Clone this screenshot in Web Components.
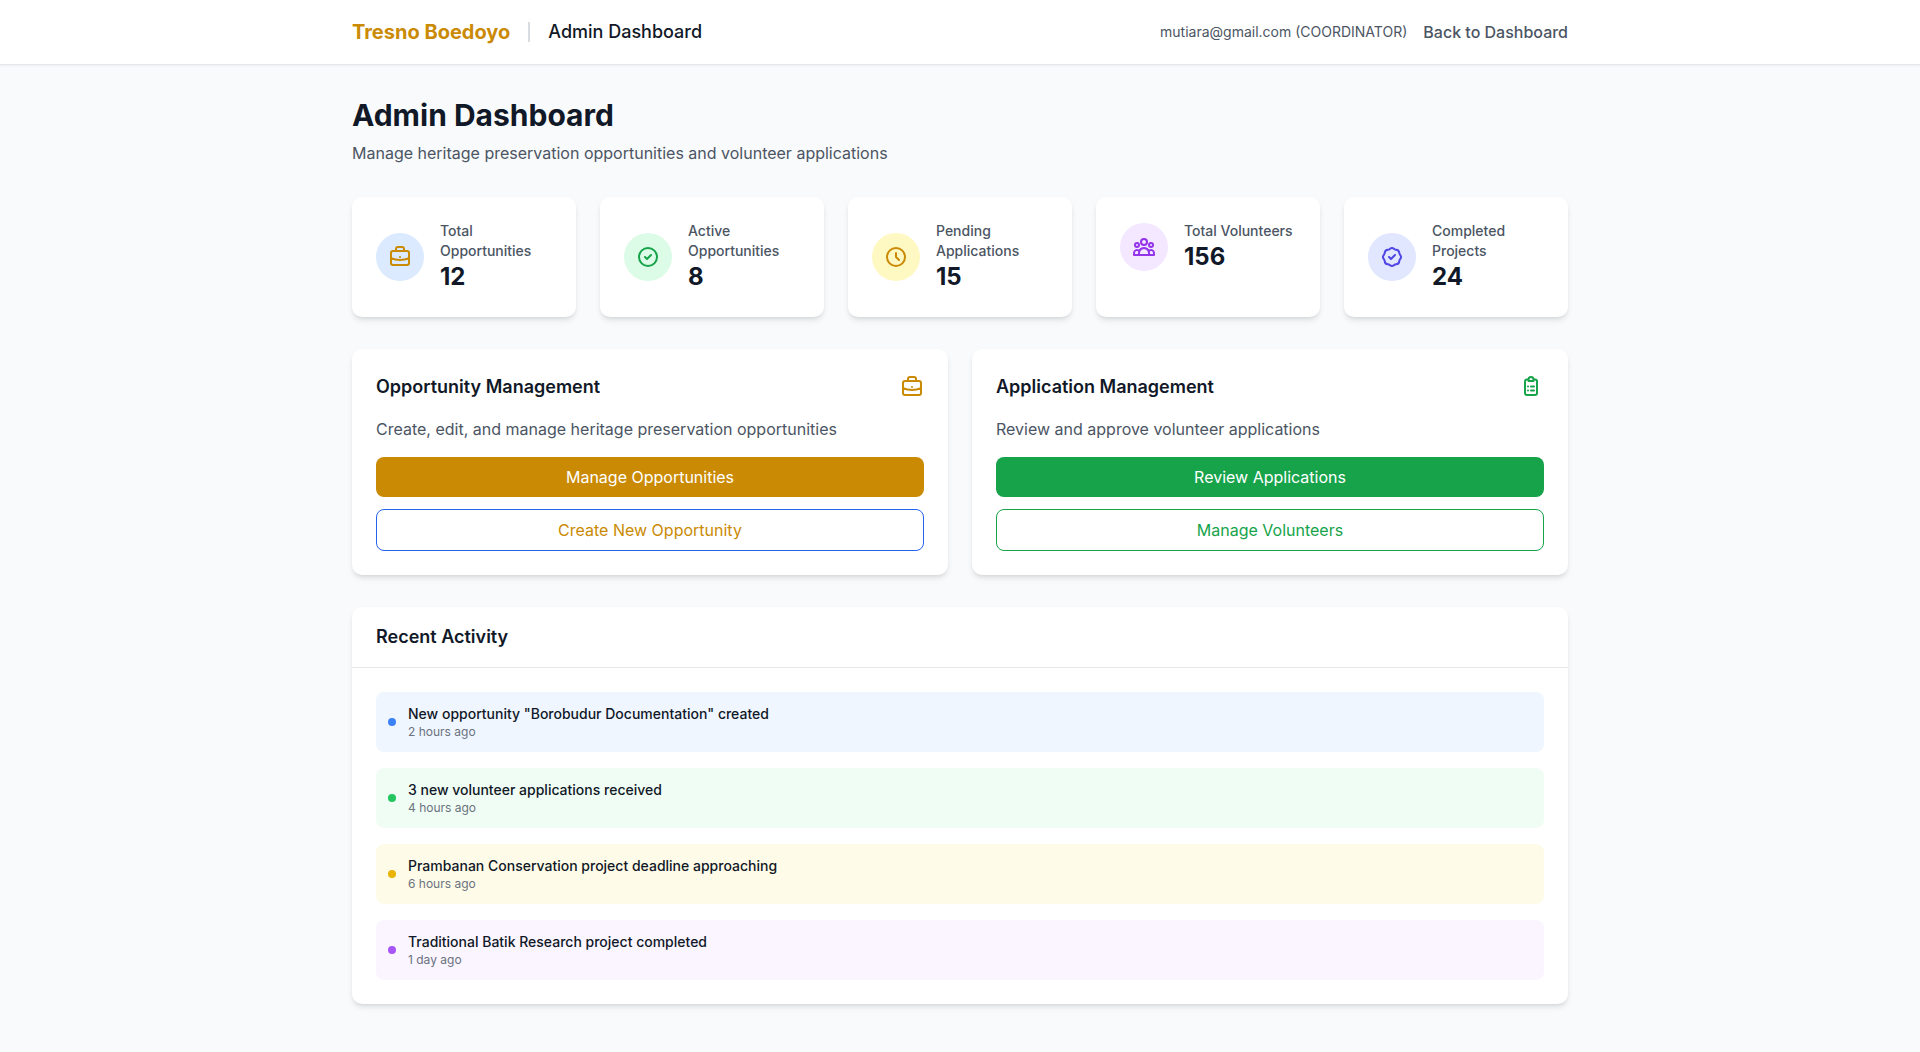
<!DOCTYPE html>
<html lang="en">
<head>
<meta charset="utf-8">
<title>Admin Dashboard</title>
<style>
  html, body { margin: 0; padding: 0; }
  body {
    min-height: 100vh;
    background: #f9fafb;
    font-family: Inter, "Liberation Sans", sans-serif;
    color: #111827;
  }
</style>
</head>
<body>
<admin-app>
  <top-nav slot="nav" brand="Tresno Boedoyo" section="Admin Dashboard" user="mutiara@gmail.com (COORDINATOR)" back="Back to Dashboard"></top-nav>

  <page-heading heading="Admin Dashboard">Manage heritage preservation opportunities and volunteer applications</page-heading>

  <stats-row>
    <stat-card icon="briefcase" tint="#dbeafe" color="#ca8a04" label="Total Opportunities" value="12"></stat-card>
    <stat-card icon="check-circle" tint="#dcfce7" color="#16a34a" label="Active Opportunities" value="8"></stat-card>
    <stat-card icon="clock" tint="#fef9c3" color="#ca8a04" label="Pending Applications" value="15"></stat-card>
    <stat-card icon="user-group" tint="#f3e8ff" color="#9333ea" label="Total Volunteers" value="156"></stat-card>
    <stat-card icon="badge-check" tint="#e0e7ff" color="#4f46e5" label="Completed Projects" value="24"></stat-card>
  </stats-row>

  <manage-row>
    <manage-card heading="Opportunity Management" icon="briefcase" color="#ca8a04" text="Create, edit, and manage heritage preservation opportunities">
      <action-button fill="#ca8a04">Manage Opportunities</action-button>
      <action-button outline="#2563eb" color="#ca8a04">Create New Opportunity</action-button>
    </manage-card>
    <manage-card heading="Application Management" icon="clipboard-list" color="#16a34a" text="Review and approve volunteer applications">
      <action-button fill="#16a34a">Review Applications</action-button>
      <action-button outline="#16a34a" color="#16a34a">Manage Volunteers</action-button>
    </manage-card>
  </manage-row>

  <recent-activity heading="Recent Activity">
    <activity-item tint="#eff6ff" dot="#3b82f6" time="2 hours ago">New opportunity "Borobudur Documentation" created</activity-item>
    <activity-item tint="#f0fdf4" dot="#22c55e" time="4 hours ago">3 new volunteer applications received</activity-item>
    <activity-item tint="#fefce8" dot="#eab308" time="6 hours ago">Prambanan Conservation project deadline approaching</activity-item>
    <activity-item tint="#faf5ff" dot="#a855f7" time="1 day ago">Traditional Batik Research project completed</activity-item>
  </recent-activity>
</admin-app>

<script>
const ICONS = {
  "briefcase": "M21 13.255A23.931 23.931 0 0112 15c-3.183 0-6.22-.62-9-1.745M16 6V4a2 2 0 00-2-2h-4a2 2 0 00-2 2v2m4 6h.01M5 20h14a2 2 0 002-2V8a2 2 0 00-2-2H5a2 2 0 00-2 2v10a2 2 0 002 2z",
  "check-circle": "M9 12l2 2 4-4m6 2a9 9 0 11-18 0 9 9 0 0118 0z",
  "clock": "M12 8v4l3 3m6-3a9 9 0 11-18 0 9 9 0 0118 0z",
  "user-group": "M17 20h5v-2a3 3 0 00-5.356-1.857M17 20H7m10 0v-2c0-.656-.126-1.283-.356-1.857M7 20H2v-2a3 3 0 015.356-1.857M7 20v-2c0-.656.126-1.283.356-1.857m0 0a5.002 5.002 0 019.288 0M15 7a3 3 0 11-6 0 3 3 0 016 0zm6 3a2 2 0 11-4 0 2 2 0 014 0zM7 10a2 2 0 11-4 0 2 2 0 014 0z",
  "badge-check": "M9 12l2 2 4-4M7.835 4.697a3.42 3.42 0 001.946-.806 3.42 3.42 0 014.438 0 3.42 3.42 0 001.946.806 3.42 3.42 0 013.138 3.138 3.42 3.42 0 00.806 1.946 3.42 3.42 0 010 4.438 3.42 3.42 0 00-.806 1.946 3.42 3.42 0 01-3.138 3.138 3.42 3.42 0 00-1.946.806 3.42 3.42 0 01-4.438 0 3.42 3.42 0 00-1.946-.806 3.42 3.42 0 01-3.138-3.138 3.42 3.42 0 00-.806-1.946 3.42 3.42 0 010-4.438 3.42 3.42 0 00.806-1.946 3.42 3.42 0 013.138-3.138z",
  // narrower than the stock clipboard, with a domed clip and bullet rows
  "clipboard-list": "M8.5 4.5H7a2 2 0 00-2 2V18a2 2 0 002 2h8a2 2 0 002-2V6.5a2 2 0 00-2-2h-1.5M8.5 4.5V6h5V4.5M8.5 4.5a2.5 2.5 0 015 0M11 11.5h3M11 15.5h3M8 11.5h.01M8 15.5h.01",
};

function iconSvg(name, color) {
  return `<svg width="24" height="24" viewBox="0 0 24 24" fill="none" stroke="${color}" stroke-width="2" stroke-linecap="round" stroke-linejoin="round" style="display:block"><path d="${ICONS[name]}"/></svg>`;
}

// small helper so every element below just supplies its shadow markup
class ShadowElement extends HTMLElement {
  constructor() {
    super();
    this.attachShadow({ mode: "open" });
  }
  attr(name) {
    return this.getAttribute(name) || "";
  }
  connectedCallback() {
    this.shadowRoot.innerHTML = this.render();
  }
}

class AdminApp extends ShadowElement {
  render() {
    return `
      <style>
        :host { display: block; }
        main {
          width: 1216px;
          margin: 0 auto;
          padding: 32px 0;
        }
      </style>
      <slot name="nav"></slot>
      <main><slot></slot></main>
    `;
  }
}

class TopNav extends ShadowElement {
  render() {
    return `
      <style>
        :host {
          display: block;
          background: #fff;
          border-bottom: 1px solid #e5e7eb;
          box-shadow: 0 1px 2px rgba(0, 0, 0, 0.05);
        }
        nav {
          width: 1216px;
          height: 64px;
          margin: 0 auto;
          display: flex;
          align-items: center;
          justify-content: space-between;
        }
        .left, .right { display: flex; align-items: center; }
        .brand { font-size: 20px; line-height: 28px; font-weight: 700; color: #ca8a04; }
        .sep { width: 2px; height: 20px; background: #d8dce3; margin: 0 18px; }
        .section { font-size: 18px; line-height: 28px; font-weight: 500; color: #111827; }
        .right { gap: 16px; }
        .user { font-size: 14px; line-height: 20px; color: #4b5563; }
        .back { font-size: 16px; line-height: 24px; font-weight: 500; color: #4b5563; }
      </style>
      <nav>
        <div class="left">
          <span class="brand">${this.attr("brand")}</span>
          <span class="sep"></span>
          <span class="section">${this.attr("section")}</span>
        </div>
        <div class="right">
          <span class="user">${this.attr("user")}</span>
          <span class="back">${this.attr("back")}</span>
        </div>
      </nav>
    `;
  }
}

class PageHeading extends ShadowElement {
  render() {
    return `
      <style>
        :host { display: block; margin-bottom: 32px; }
        h1 { margin: 0 0 8px; font-size: 30px; line-height: 36px; font-weight: 700; color: #111827; }
        p { margin: 0; font-size: 16px; line-height: 24px; color: #4b5563; }
      </style>
      <h1>${this.attr("heading")}</h1>
      <p><slot></slot></p>
    `;
  }
}

class StatsRow extends ShadowElement {
  render() {
    return `
      <style>
        :host {
          display: grid;
          grid-template-columns: repeat(5, 1fr);
          gap: 24px;
          margin-bottom: 32px;
        }
      </style>
      <slot></slot>
    `;
  }
}

class StatCard extends ShadowElement {
  render() {
    return `
      <style>
        :host {
          display: block;
          background: #fff;
          border-radius: 10px;
          padding: 24px;
          box-shadow: 0 4px 6px -1px rgba(0, 0, 0, 0.1), 0 2px 4px -2px rgba(0, 0, 0, 0.1);
        }
        .row { display: flex; align-items: center; }
        .circle {
          flex: none;
          width: 48px;
          height: 48px;
          border-radius: 50%;
          background: ${this.attr("tint")};
          display: flex;
          align-items: center;
          justify-content: center;
          margin-right: 16px;
        }
        .label { font-size: 14px; line-height: 20px; font-weight: 500; color: #4b5563; }
        .value { font-size: 24px; line-height: 32px; font-weight: 700; color: #111827; }
      </style>
      <div class="row">
        <div class="circle">${iconSvg(this.attr("icon"), this.attr("color"))}</div>
        <div>
          <div class="label">${this.attr("label")}</div>
          <div class="value">${this.attr("value")}</div>
        </div>
      </div>
    `;
  }
}

class ManageRow extends ShadowElement {
  render() {
    return `
      <style>
        :host {
          display: grid;
          grid-template-columns: repeat(2, 1fr);
          gap: 24px;
          margin-bottom: 32px;
        }
      </style>
      <slot></slot>
    `;
  }
}

class ManageCard extends ShadowElement {
  render() {
    return `
      <style>
        :host {
          display: block;
          background: #fff;
          border-radius: 10px;
          padding: 24px;
          box-shadow: 0 4px 6px -1px rgba(0, 0, 0, 0.1), 0 2px 4px -2px rgba(0, 0, 0, 0.1);
        }
        .head {
          display: flex;
          align-items: center;
          justify-content: space-between;
          margin-bottom: 16px;
        }
        h3 { margin: 0; font-size: 18px; line-height: 28px; font-weight: 600; color: #111827; }
        p { margin: 0 0 16px; font-size: 16px; line-height: 24px; color: #4b5563; }
        .actions { display: flex; flex-direction: column; gap: 12px; }
      </style>
      <div class="head">
        <h3>${this.attr("heading")}</h3>
        ${iconSvg(this.attr("icon"), this.attr("color"))}
      </div>
      <p>${this.attr("text")}</p>
      <div class="actions"><slot></slot></div>
    `;
  }
}

class ActionButton extends ShadowElement {
  render() {
    const fill = this.attr("fill");
    const outline = this.attr("outline");
    const look = fill
      ? `background: ${fill}; color: #fff; padding: 8px 16px;`
      : `background: #fff; color: ${this.attr("color")}; border: 1px solid ${outline}; padding: 8px 16px;`;
    return `
      <style>
        :host {
          display: block;
          border-radius: 8px;
          text-align: center;
          font-size: 16px;
          line-height: 24px;
          font-weight: 400;
          ${look}
        }
      </style>
      <slot></slot>
    `;
  }
}

class RecentActivity extends ShadowElement {
  render() {
    return `
      <style>
        :host {
          display: block;
          background: #fff;
          border-radius: 10px;
          box-shadow: 0 4px 6px -1px rgba(0, 0, 0, 0.1), 0 2px 4px -2px rgba(0, 0, 0, 0.1);
        }
        h3 {
          margin: 0;
          padding: 16px 24px;
          font-size: 18px;
          line-height: 28px;
          font-weight: 600;
          color: #111827;
          border-bottom: 1px solid #e5e7eb;
        }
        .list { padding: 24px; display: flex; flex-direction: column; gap: 16px; }
      </style>
      <h3>${this.attr("heading")}</h3>
      <div class="list"><slot></slot></div>
    `;
  }
}

class ActivityItem extends ShadowElement {
  render() {
    return `
      <style>
        :host {
          display: flex;
          align-items: center;
          padding: 12px;
          border-radius: 8px;
          background: ${this.attr("tint")};
        }
        .dot {
          flex: none;
          width: 8px;
          height: 8px;
          border-radius: 50%;
          background: ${this.attr("dot")};
          margin-right: 12px;
        }
        .title { font-size: 14px; line-height: 20px; font-weight: 500; color: #111827; }
        .time { font-size: 12px; line-height: 16px; color: #6b7280; }
      </style>
      <span class="dot"></span>
      <div>
        <div class="title"><slot></slot></div>
        <div class="time">${this.attr("time")}</div>
      </div>
    `;
  }
}

customElements.define("admin-app", AdminApp);
customElements.define("top-nav", TopNav);
customElements.define("page-heading", PageHeading);
customElements.define("stats-row", StatsRow);
customElements.define("stat-card", StatCard);
customElements.define("manage-row", ManageRow);
customElements.define("manage-card", ManageCard);
customElements.define("action-button", ActionButton);
customElements.define("recent-activity", RecentActivity);
customElements.define("activity-item", ActivityItem);
</script>
</body>
</html>
